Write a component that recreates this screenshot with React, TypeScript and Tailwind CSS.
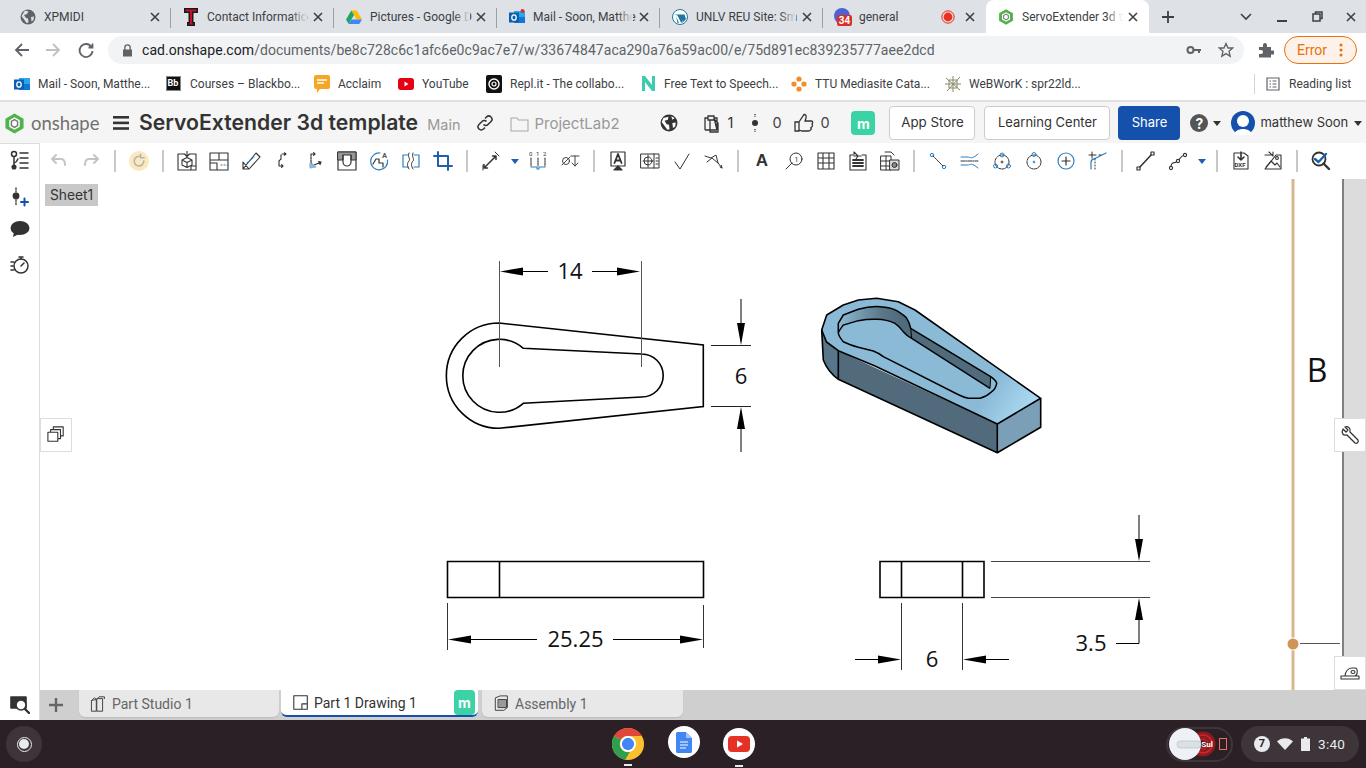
import React from "react";

const S = ({ s = 20, children, c = "#333", w = 1.3, fill = "none", vb }: any) => (
  <svg width={s} height={s} viewBox={vb || "0 0 20 20"} fill={fill} stroke={c} strokeWidth={w} strokeLinecap="round" strokeLinejoin="round" className="shrink-0">
    {children}
  </svg>
);
const BLUE = "#2a7fc4";

const Globe = ({ s = 16, c = "#5f6368" }: any) => (
  <svg width={s} height={s} viewBox="0 0 16 16" className="shrink-0">
    <circle cx="8" cy="8" r="7.5" fill={c} />
    <path d="M5 1.5 L8.5 2.5 L7 5 L4 6 L6 9 L8 9.5 L8.5 13.5 L6.5 14 L3 9 L1.5 7 Z M11 8 L14 7.5 L13.5 11 L11.5 12.5 Z" fill="#dee1e6" />
  </svg>
);
const TT = () => (
  <svg width="14" height="18" viewBox="0 0 14 18" className="shrink-0">
    <path d="M0 0H14V5H9.500V14H11V18H3V14H4.500V5H0Z" fill="#1a1a1a" />
    <path d="M1.500 1.500H12.500V3.500H8V15.500H9.500V16.500H4.500V15.500H6V3.500H1.500Z" fill="#c8102e" />
  </svg>
);
const Drive = () => (
  <svg width="16" height="16" viewBox="0 0 16 16" className="shrink-0">
    <path d="M5.3 1.5H10.7L16 10.5H10.6Z" fill="#fbbc04" />
    <path d="M5.3 1.5L0 10.5L2.7 15L8 6Z" fill="#1fa463" />
    <path d="M5.4 10.5H16L13.3 15H2.7Z" fill="#4285f4" />
  </svg>
);
const Outlook = ({ dot }: any) => (
  <svg width="16" height="16" viewBox="0 0 16 16" className="shrink-0">
    <rect x="5" y="2" width="11" height="12" fill="#28a8ea" />
    <rect x="5" y="8" width="11" height="6" fill="#0f78d4" />
    <rect x="0" y="3.5" width="10" height="10" fill="#0a5fb0" />
    <ellipse cx="5" cy="8.5" rx="2.2" ry="2.7" fill="none" stroke="#fff" strokeWidth="1.3" />
    {dot && <circle cx="13.5" cy="2" r="2" fill="#d93025" />}
  </svg>
);
const WP = () => (
  <svg width="16" height="16" viewBox="0 0 16 16" className="shrink-0">
    <circle cx="8" cy="8" r="7.5" fill="#fff" stroke="#21759b" />
    <path d="M2.5 5.5H8L11 13.5H9L5.5 6.5ZM6.5 5.5H12.5L14 10L11.5 13Z M4 7 L7 14 L5.5 14 Z" fill="#21759b" />
  </svg>
);
const Cal = () => (
  <svg width="18" height="18" viewBox="0 0 18 18" className="shrink-0">
    <circle cx="8" cy="8" r="8" fill="#4a64d8" />
    <rect x="3" y="7" width="15" height="11" rx="2" fill="#d93025" />
    <text x="10.5" y="16" textAnchor="middle" fontSize="10" fontWeight="700" fill="#fff" fontFamily="Roboto, sans-serif">34</text>
  </svg>
);
const OnHex = ({ s = 16 }: any) => (
  <svg width={s} height={s} viewBox="0 0 20 22" className="shrink-0">
    <path d="M10 0.5L19.5 6V16L10 21.5L0.5 16V6Z" fill="#4fb34a" />
    <path d="M10 4.500L15.500 7.700V14.300L10 17.500L4.500 14.300V7.700Z" fill="#fff" />
    <path d="M10 7L13.200 8.900V13.100L10 15L6.800 13.100V8.900Z" fill="none" stroke="#777" strokeWidth="1.500" />
  </svg>
);
const Rec = () => (
  <svg width="14" height="14" viewBox="0 0 14 14" className="shrink-0">
    <circle cx="7" cy="7" r="6.2" fill="#f8d7d4" stroke="#d93025" />
    <circle cx="7" cy="7" r="4.4" fill="#e53225" />
  </svg>
);
const X = ({ c = "#3c4043" }: any) => (
  <svg width="10" height="10" viewBox="0 0 10 10" stroke={c} strokeWidth="1.6" className="shrink-0">
    <path d="M1 1L9 9M9 1L1 9" />
  </svg>
);

function ChromeTab({ icon, title, active, extra, sep = true }: any) {
  return (
    <div className={`relative flex h-[33px] w-[163px] shrink-0 items-center pl-3 pr-[11px] ${active ? "rounded-t-lg bg-white" : ""}`}>
      <div className="flex w-4 items-center justify-center">{icon}</div>
      <div className="relative ml-2 w-[100px] whitespace-nowrap text-[12px] text-[#3c4043]">
        {title}
        <div className={`absolute inset-y-0 right-0 w-4 bg-gradient-to-r from-transparent ${active ? "to-white" : "to-[#dee1e6]"}`} />
      </div>
      <div className="flex flex-1 items-center justify-end gap-[10px]">
        {extra}
        <X />
      </div>
      {sep && <div className="absolute right-0 top-[8px] h-[20px] w-px bg-[#9aa0a6]" />}
    </div>
  );
}

function Bm({ w, icon, t }: any) {
  return (
    <div className="flex shrink-0 items-center" style={{ width: w }}>
      <div className="flex w-4 justify-center">{icon}</div>
      <span className="ml-2 whitespace-nowrap text-[12px] text-[#3c4043]">{t}</span>
    </div>
  );
}

const T = ({ children }: any) => <div className="flex h-9 w-8 shrink-0 items-center justify-center">{children}</div>;
const Sep = () => (
  <div className="flex h-9 w-4 shrink-0 items-center justify-center">
    <div className="h-[22px] w-[2px] bg-[#c8c8c8]" />
  </div>
);
const Caret = () => (
  <div className="flex h-9 w-[15px] shrink-0 items-center justify-center">
    <svg width="8" height="5" viewBox="0 0 8 5"><path d="M0 0H8L4 5Z" fill="#1f5fb0" /></svg>
  </div>
);

function Toolbar() {
  return (
    <div className="flex h-9 shrink-0 items-center bg-white pl-[3px]">
      <T><S c="#c4c4c4" w={2}><path d="M7 4L3 8L7 12M3 8H12C15 8 16 11 16 14" /></S></T>
      <T><S c="#c4c4c4" w={2}><path d="M13 4L17 8L13 12M17 8H8C5 8 4 11 4 14" /></S></T>
      <Sep />
      <T>
        <div className="flex h-5 w-5 items-center justify-center rounded-full bg-[#fbe9bd]">
          <S s={16} c="#b5b5b5" w={2}><path d="M16 10A6 6 0 1 1 12 4.5M12 1.5V6H16.5" /></S>
        </div>
      </T>
      <Sep />
      <T><S w={1.1}><path d="M1 3H7M13 3H19V19H1V3M14 19V15H19" /><path d="M10 0V5M7.500 3L10 5.500L12.500 3" /><path d="M5 9L10 6.500L15 9V14L10 16.500L5 14ZM10 11.500V16.500M5 9L10 11.500L15 9" /></S></T>
      <T><S w={1.1}><path d="M1 2H19V19H1ZM1 9H19M10 2V9M1 12H8V19M8 12" /><path d="M12 14H19" stroke={BLUE} strokeDasharray="1 2" /></S></T>
      <T><S w={1.1}><path d="M2 18L15 2L19 6L8 18Z M2 11L8 18 M2 11V18H8" /><path d="M6 12L13 6" stroke={BLUE} strokeDasharray="1.5 1.5" /></S></T>
      <T><S w={1.2}><path d="M9 3H13M13 3L11 1.5M13 3L11 4.5M8 4V8L6 10V15H10M10 15L8.500 13.500M10 15L8.500 16.500" strokeDasharray="2 1" /></S></T>
      <T><S w={1.2}><path d="M6 3V11L8 16M6 3H10M10 3L8.5 1.5M10 3L8.5 4.5" strokeDasharray="2 1" /><path d="M7 15L16 11M16 11L13.5 10.5M16 11L15 13.5" /><path d="M5 12L11 16L5 17Z" fill="#8fb3d9" stroke="#8fb3d9" /></S></T>
      <T><S w={1.2}><path d="M1 1H19V19H1Z" /><path d="M1 1H19V9H14V4H6V9H1Z" fill="#999" stroke="#333" strokeWidth="1" /><path d="M6 4V11A4 4 0 0 0 14 11V4" /></S></T>
      <T><S c={BLUE} w={1.2}><path d="M11 2A8.500 8.500 0 1 0 18.500 9" /><path d="M4 13L7 8H10V12L14 12V16" stroke="#333" /><text x="13" y="7" fontSize="7.500" fontWeight="700" stroke="none" fill="#555">A</text></S></T>
      <T><S c={BLUE} w={1.2}><path d="M7 4H2V16H7M13 4H18V16H13" /><path d="M8 2C6 6 10 8 8 10S6 15 8 18M12 2C10 6 14 8 12 10S10 15 12 18" stroke="#333" strokeWidth="1" /></S></T>
      <T><S c="#1f5fb0" w={2}><path d="M5 1V15H19M1 5H15V19" /></S></T>
      <Sep />
      <T><S w={1}><path d="M3 17L15 5M3 17V13.500M3 17H6.500M15 5H11.500M15 5V8.500" strokeWidth="1.500" /><path d="M2 14L2 19M14 1L18 5" /></S></T>
      <Caret />
      <T><S c={BLUE} w={1.1}><path d="M3 16H9M11 16H17M9 16V18H11V16" /><path d="M3 7V15M10 7V15M17 7V15" stroke="#333" strokeDasharray="1.500 1" /><text x="1" y="5" fontSize="6" fill="#333" stroke="none">0</text><text x="8" y="5" fontSize="6" fill="#333" stroke="none">1</text><text x="15" y="5" fontSize="6" fill="#333" stroke="none">2</text></S></T>
      <T><S c="#444" w={1}><circle cx="6" cy="10" r="3.500" /><path d="M2 14L10 6M11 5H19M15 5V15M12 12L15 15L18 12" /></S></T>
      <Sep />
      <T><S w={1.2}><path d="M3 1H17V15H3Z" /><path d="M10 3L6.500 12M10 3L13.500 12M7.500 9.500H12.500" strokeWidth="1.800" /><path d="M10 15L6 19H14Z" fill="#333" /></S></T>
      <T><S w={1}><path d="M1 3H19V17H1ZM14 3V17M16 7H18M16 10H18M16 13H18" /><circle cx="8" cy="10" r="4" /><path d="M8 4V16M3 10H13" /></S></T>
      <T><S w={1}><path d="M3 11L8 18L17 3" /></S></T>
      <T><S w={1}><path d="M1 5L7 7L12 4L14 12L18 17M3 11L8 7L14 12M16 16L18 17L17.5 14.5" /></S></T>
      <Sep />
      <T><span className="text-[17px] font-bold text-[#333] [font-family:'Liberation_Sans',sans-serif]">A</span></T>
      <T><S w={1}><circle cx="12" cy="8" r="6" /><path d="M8 12L2 18" /><text x="10.5" y="10.5" fontSize="7" fill="#333" stroke="none">1</text></S></T>
      <T><S w={1.1}><path d="M2 2H18V18H2ZM2 7H18M2 12H18M7 2V18M13 2V18" /></S></T>
      <T><S w={1.1}><path d="M2 4H6M14 4H18V19H2V4" /><path d="M6 1L10 5L8 8M13 5H6M6 1V3" /><path d="M5 9H15M5 12H15M5 15H15" strokeWidth="1.800" /></S></T>
      <T><S w={1}><path d="M1 5H11V19H1ZM1 10H11M1 15H11M6 5V19" /><path d="M5 1H11L14 4" /><rect x="10" y="9" width="9" height="10" fill="#ddd" /><circle cx="14.5" cy="14" r="2.5" fill="#888" /></S></T>
      <Sep />
      <T><S w={1}><circle cx="4" cy="4" r="1.7" stroke={BLUE} /><circle cx="16" cy="16" r="1.7" stroke={BLUE} /><path d="M5 5L15 15" strokeDasharray="2 1" /></S></T>
      <T><S w={1}><path d="M1 6H7C11 6 11 9 18 3M1 14H7C11 14 11 11 18 17" stroke={BLUE} /><path d="M1 10H18" strokeDasharray="4 1 1 1" /></S></T>
      <T><S w={1}><circle cx="10" cy="11" r="7" strokeDasharray="2 1" /><circle cx="10" cy="4" r="2" stroke={BLUE} /><circle cx="3.5" cy="15" r="2" stroke={BLUE} /><circle cx="16.5" cy="15" r="2" stroke={BLUE} /><path d="M10 10V12M9 11H11" /></S></T>
      <T><S w={1}><circle cx="10" cy="11" r="7" strokeDasharray="3 1" /><circle cx="10" cy="3.5" r="2" stroke={BLUE} /><path d="M10 10V12M9 11H11" stroke={BLUE} /></S></T>
      <T><S w={1.2}><circle cx="10" cy="10" r="8" stroke={BLUE} /><path d="M10 6V14M6 10H14" /></S></T>
      <T><S w={1.2}><path d="M3 18V11C3 8 6 8 8 7L18 2" stroke={BLUE} /><path d="M1 4H8M4 1V7M11 4H13" strokeWidth="1" /><path d="M7 8V18" strokeDasharray="1 2" strokeWidth="1" /></S></T>
      <Sep />
      <T><S w={1.2}><path d="M3 17L16 3" strokeWidth="1.6" /><rect x="1" y="16" width="3" height="3" fill="#fff" /><rect x="15" y="1" width="3" height="3" fill="#fff" /></S></T>
      <T><S w={1.1}><path d="M3 16C3 10 7 13 10 10S12 5 17 4" /><circle cx="3" cy="17" r="1.6" fill="#fff" /><circle cx="10" cy="10" r="1.6" fill="#fff" /><circle cx="17" cy="4" r="1.6" fill="#fff" /></S></T>
      <Caret />
      <Sep />
      <T><S w={1.1}><path d="M3 18V2H13L17 5V18Z" /><path d="M10 1V9M7 6L10 9L13 6" strokeWidth="1.6" /><text x="3.5" y="16" fontSize="6" fontWeight="700" fill="#333" stroke="none">DXF</text></S></T>
      <T><S w={1.1}><path d="M2 4H8M13 4H18V18H2Z" /><path d="M6 1L10 5M10 5V1M3 16L8 10L12 14L14 12L17 16" /><circle cx="14" cy="7" r="1.4" /></S></T>
      <Sep />
      <T><S w={1.8}><circle cx="8" cy="8" r="6.5" /><path d="M4 8L7.5 11L15 3" stroke="#1f5fb0" strokeWidth="2.4" /><path d="M12.5 12.5L18 18" strokeWidth="2.4" /></S></T>
    </div>
  );
}

const Arrow = ({ d }: any) => <path d={d} fill="#000" stroke="none" />;

const OUTER = "M821.7 330 L826.700 315 L843.300 305 L858.300 300 L876.700 298.300 L898.300 301.700 L915 310 L1040.7 398.3 L997.3 424 L875 366 L838.3 350.7 L826.500 342 Z";
const RIM = "M838.3 323.3 L843.3 315 L858.3 309.3 C868 306.500 873 306.300 880 306.700 C888 307 892 308 896.700 310.700 C902 314 905 316 906.700 318.300 C908.500 321 910 325 910.700 328.300 L990.700 376.700 C994 379 996 381 996.700 383.300 C996 387 994 390 991.700 391.700 C987 396 983 397.500 980 398.300 L968.300 398.300 C964 397.500 961 396 958 394.500 L883.300 356.700 C880 354 876 352 873.300 351 L858.300 347.300 C851 345 846 343 843.300 341.700 C841 339 838.500 335 838.300 332.700Z";
const FLOOR = "M838.300 332.700 C840 329 842 327 843.300 325 L858.300 320.700 C865 319.500 870 319 876.700 319.300 C884 319.500 890 321 895 323.300 C899 326 901 329 903.300 331.700 C906 335 909 337 911.700 338.300 L990 388.300";

function Drawing() {
  const num = "'Open Sans', sans-serif";
  return (
    <svg width="1302" height="511" viewBox="40 179 1302 511" className="absolute left-0 top-0" fill="none">
      <defs>
        <linearGradient id="topf" x1="880" y1="330" x2="1020" y2="420" gradientUnits="userSpaceOnUse">
          <stop offset="0" stopColor="#8abad6" />
          <stop offset="0.75" stopColor="#8abad6" />
          <stop offset="1" stopColor="#a9d8f2" />
        </linearGradient>
        <linearGradient id="wall" x1="842" y1="0" x2="900" y2="0" gradientUnits="userSpaceOnUse">
          <stop offset="0" stopColor="#8ab4cc" />
          <stop offset="0.7" stopColor="#5a7688" />
          <stop offset="1" stopColor="#4f6b7c" />
        </linearGradient>
      </defs>
      <g stroke="#000" strokeWidth="1.6">
        <path d="M499 323 L703.3 345 V406.5 L499 428.3 A52.65 52.65 0 0 1 499 323 Z" />
        <path d="M523.3 348.3 L641.7 354 A21.5 21.5 0 0 1 641.7 397 L523.3 403.3 A36.5 36.5 0 1 1 523.3 348.3 Z" />
      </g>
      <g stroke="#555" strokeWidth="1">
        <path d="M499.5 261V367M641.5 261V367" />
        <path d="M711 345.5H751M711 406.5H751" stroke="#222" />
      </g>
      <g stroke="#000" strokeWidth="1">
        <path d="M522 271.5H548M592 271.5H620M741 299V325M741 428V452" />
      </g>
      <Arrow d="M500 271.5L523 267.5V275.5Z" />
      <Arrow d="M640 271.5L617 267.5V275.5Z" />
      <Arrow d="M741 345L737 323H745Z" />
      <Arrow d="M741 407L737 429H745Z" />
      <text x="570" y="279" textAnchor="middle" fontSize="22" fill="#111" fontFamily={num}>14</text>
      <text x="741" y="384" textAnchor="middle" fontSize="22" fill="#111" fontFamily={num}>6</text>

      <path d="M821.7 330 L823.3 360 Q828 372 838.3 379.3 L997.3 452.7 L1040.7 427.3 V398 L997.3 424 L838.3 350.7 Z" fill="#516b7c" />
      <path d="M821.7 330 L823.3 360 Q828 372 838.3 379.3 V350.7 L826.500 342 Z" fill="#587689" />
      <path d="M997.3 424 L1040.7 398.3 V427.3 L997.3 452.7 Z" fill="#7a9fb6" />
      <path d={OUTER} fill="url(#topf)" stroke="#000" strokeWidth="1.6" strokeLinejoin="round" />
      <path d={RIM} fill="#8abad6" />
      <path d="M838.3 323.3 L843.3 315 L858.3 309.3 C868 306.500 873 306.300 880 306.700 C888 307 892 308 896.700 310.700 C902 314 905 316 906.700 318.300 C908.500 321 910 325 910.700 328.300 L911.700 338.300 C909 337 906 335 903.300 331.700 C901 329 899 326 895 323.300 C890 321 884 319.500 876.700 319.300 C870 319 865 319.500 858.300 320.700 L843.300 325 C842 327 840 329 838.300 332.700Z" fill="url(#wall)" />
      <path d="M910.700 328.300 L990.700 376.700 L990 388.300 L911.700 338.300Z" fill="#4f6b7c" />
      <path d={RIM} stroke="#000" strokeWidth="1.5" strokeLinejoin="round" />
      <path d={FLOOR} stroke="#000" strokeWidth="1.4" />
      <path d="M910.700 328.300 L911.700 338.300M990.700 376.700 L990 388.300" stroke="#000" strokeWidth="1" />
      <path d="M821.7 330 L823.3 360 Q828 372 838.3 379.3 L997.3 452.7 L1040.7 427.3 V398.3 M838.3 350.7 V379.3 M997.3 424 V452.7" stroke="#000" strokeWidth="1.6" strokeLinejoin="round" />

      <path d="M447.5 561.5H703.5V597.5H447.5ZM499.5 561.5V597.5" stroke="#000" strokeWidth="1.6" />
      <path d="M447.5 603V650M703.5 605V648" stroke="#333" strokeWidth="1" />
      <path d="M470 639.5H537M613 639.5H680" stroke="#000" strokeWidth="1" />
      <Arrow d="M448 639.5L471 635.5V643.5Z" />
      <Arrow d="M703 639.5L680 635.5V643.5Z" />
      <text x="575.500" y="647" textAnchor="middle" fontSize="22" fill="#111" fontFamily={num}>25.25</text>

      <path d="M880 561.5H984V597.5H880ZM901.5 561.5V597.5M962.5 561.5V597.5" stroke="#000" strokeWidth="1.6" />
      <path d="M901.5 603V670M962.5 603V670" stroke="#333" strokeWidth="1" />
      <path d="M991 561.5H1150M991 597.5H1150" stroke="#444" strokeWidth="1" />
      <path d="M855 659.5H880M985 659.5H1009M1139 515V540M1139 618V643.5H1116" stroke="#000" strokeWidth="1" />
      <Arrow d="M901 659.5L878 655.5V663.5Z" />
      <Arrow d="M963 659.5L986 655.5V663.5Z" />
      <Arrow d="M1139 561L1135 539H1143Z" />
      <Arrow d="M1139 598L1135 620H1143Z" />
      <text x="932" y="667" textAnchor="middle" fontSize="22" fill="#111" fontFamily={num}>6</text>
      <text x="1091" y="651" textAnchor="middle" fontSize="22" fill="#111" fontFamily={num}>3.5</text>

      <path d="M1293 179V690" stroke="#d8b78f" strokeWidth="3" />
      <circle cx="1293" cy="644" r="6.5" fill="#fff" />
      <circle cx="1293" cy="644" r="5.5" fill="#cf9557" />
      <path d="M1300 643.5H1340" stroke="#555" strokeWidth="1" />
      <text x="1317" y="382" textAnchor="middle" fontSize="32" fill="#111" fontFamily={num}>B</text>
    </svg>
  );
}

function BottomTab({ w, icon, label, active, badge, cls }: any) {
  return (
    <div className={`flex h-[27px] shrink-0 items-center rounded-b-md pl-[11px] text-[14px] ${cls} ${active ? "border-b-2 border-[#1550ad] bg-white text-[#333]" : "bg-[#e8e8e8] text-[#666] shadow-[0_1px_1px_#bbb]"}`} style={{ width: w }}>
      {icon}
      <span className="ml-[4px] mt-[2px] flex-1 whitespace-nowrap">{label}</span>
      {badge}
    </div>
  );
}

const Mbadge = ({ cls }: any) => (
  <div className={`flex items-center justify-center bg-[#3bd3a5] font-bold text-white [font-family:Inter,sans-serif] ${cls}`}>m</div>
);

const SideBtn = ({ children, cls }: any) => (
  <div className={`absolute flex h-[34px] w-8 items-center justify-center border border-[#ddd] bg-white ${cls}`}>{children}</div>
);

export default function App() {
  return (
    <div className="flex h-[768px] w-[1366px] flex-col overflow-hidden bg-white [font-family:Roboto,sans-serif]">
      <div className="flex h-[33px] shrink-0 items-center bg-[#dee1e6] pl-2">
        <ChromeTab icon={<Globe />} title="XPMIDI" />
        <ChromeTab icon={<TT />} title="Contact Informatio" />
        <ChromeTab icon={<Drive />} title="Pictures - Google D" />
        <ChromeTab icon={<Outlook dot />} title="Mail - Soon, Matthe" />
        <ChromeTab icon={<WP />} title="UNLV REU Site: Sm" />
        <ChromeTab icon={<Cal />} title="general" extra={<Rec />} sep={false} />
        <ChromeTab active icon={<OnHex />} title="ServoExtender 3d t" sep={false} />
        <div className="ml-[11px] flex w-4 justify-center">
          <svg width="14" height="14" viewBox="0 0 14 14" stroke="#3c4043" strokeWidth="1.8"><path d="M7 1V13M1 7H13" /></svg>
        </div>
        <div className="ml-[64px]"><svg width="12" height="8" viewBox="0 0 12 8" fill="none" stroke="#3c4043" strokeWidth="1.6"><path d="M1 1L6 6L11 1" /></svg></div>
        <div className="ml-[25px] mt-2 h-[2px] w-[10px] bg-[#3c4043]" />
        <svg width="11" height="11" viewBox="0 0 11 11" fill="none" stroke="#3c4043" strokeWidth="1.5" className="ml-[25px]"><path d="M1 3H8V10H1ZM3.5 3V1H10V7.5H8" /></svg>
        <div className="ml-[23px]"><X /></div>
      </div>
      <div className="flex h-[34px] shrink-0 items-center bg-white">
        <svg width="18" height="18" viewBox="0 0 18 18" fill="none" stroke="#5f6368" strokeWidth="1.8" className="ml-[13px]"><path d="M16 9H3M9 3L3 9L9 15" /></svg>
        <svg width="18" height="18" viewBox="0 0 18 18" fill="none" stroke="#bdc1c6" strokeWidth="1.8" className="ml-[13px]"><path d="M2 9H15M9 3L15 9L9 15" /></svg>
        <svg width="18" height="18" viewBox="0 0 18 18" fill="none" stroke="#5f6368" strokeWidth="1.8" className="ml-[15px]"><path d="M14.5 6A6.5 6.5 0 1 0 15.5 10M15.5 2.5V6.5H11.5" /></svg>
        <div className="ml-[13px] flex h-[28px] w-[1136px] items-center rounded-full bg-[#f1f3f4] pl-[14px]">
          <svg width="11" height="13" viewBox="0 0 11 13" className="shrink-0"><path d="M1 5.5H2.2V3.5A3.3 3.3 0 0 1 8.8 3.5V5.5H10V12.5H1ZM3.5 5.5H7.5V3.5A2 2 0 0 0 3.5 3.5Z" fill="#5f6368" /></svg>
          <span className="ml-[9px] mt-[1px] whitespace-nowrap text-[14px] tracking-[0.05px] text-[#202124]">cad.onshape.com<span className="text-[#5f6368]">/documents/be8c728c6c1afc6e0c9ac7e7/w/33674847aca290a76a59ac00/e/75d891ec839235777aee2dcd</span></span>
          <div className="flex-1" />
          <svg width="16" height="16" viewBox="0 0 16 16" className="mr-[16px]"><circle cx="4.5" cy="8" r="3" fill="none" stroke="#5f6368" strokeWidth="2" /><path d="M7 7H15V9H14V11H12V9H7Z" fill="#5f6368" /></svg>
          <svg width="16" height="16" viewBox="0 0 16 16" fill="none" stroke="#5f6368" strokeWidth="1.3" className="mr-[10px]"><path d="M8 1.5L10 6H14.8L11 9.2L12.2 14.3L8 11.6L3.8 14.3L5 9.2L1.2 6H6Z" /></svg>
        </div>
        <svg width="16" height="16" viewBox="0 0 16 16" className="ml-[14px]"><path d="M1 5H5V3A2 2 0 0 1 9 3V5H13V8.5H15A2 2 0 0 1 15 12.5H13V15.5H1V12H3A2 2 0 0 0 3 8H1Z" fill="#5f6368" /></svg>
        <div className="ml-[10px] flex h-[28px] w-[73px] items-center rounded-full border border-[#e8710a] bg-[#fdf2e9] pl-[12px]">
          <span className="text-[14px] text-[#e8710a]">Error</span>
          <svg width="4" height="14" viewBox="0 0 4 14" className="ml-[12px]" fill="#e8710a"><circle cx="2" cy="2" r="1.5" /><circle cx="2" cy="7" r="1.5" /><circle cx="2" cy="12" r="1.5" /></svg>
        </div>
      </div>
      <div className="flex h-[33px] shrink-0 items-center bg-white pl-[14px]">
        <Bm w={152} icon={<Outlook />} t="Mail - Soon, Matthe..." />
        <Bm w={148} icon={<div className="flex h-[15px] w-[15px] -translate-x-[1px] items-center justify-center border border-[#888] bg-[#111] text-[9px] font-bold leading-none text-white">Bb</div>} t="Courses – Blackbo..." />
        <Bm w={84} icon={<svg width="16" height="18" viewBox="0 0 16 18"><path d="M2 0H14A2 2 0 0 1 16 2V12A2 2 0 0 1 14 14H6L3 18V14H2A2 2 0 0 1 0 12V2A2 2 0 0 1 2 0Z" fill="#f5a623" /><path d="M3 5H13M3 8H10" stroke="#fff" strokeWidth="1.3" /></svg>} t="Acclaim" />
        <Bm w={88} icon={<svg width="16" height="12" viewBox="0 0 16 12"><rect width="16" height="12" rx="3" fill="#e60012" /><path d="M6.5 3.5L10.5 6L6.5 8.5Z" fill="#fff" /></svg>} t="YouTube" />
        <Bm w={154} icon={<svg width="16" height="18" viewBox="0 0 16 18"><rect width="16" height="18" rx="2" fill="#111" /><circle cx="8" cy="9" r="5" fill="none" stroke="#fff" strokeWidth="1.4" /><circle cx="8" cy="9" r="2" fill="none" stroke="#fff" strokeWidth="1.2" /></svg>} t="Repl.it - The collabo..." />
        <Bm w={151} icon={<svg width="15" height="17" viewBox="0 0 15 17"><path d="M1 1H4L11 10V1H14V16H11L4 7V16H1Z" fill="#3ecbb0" /></svg>} t="Free Text to Speech..." />
        <Bm w={154} icon={<svg width="16" height="16" viewBox="0 0 16 16" fill="#f28c28"><circle cx="8" cy="3" r="2.6" /><circle cx="3" cy="8" r="2.6" /><circle cx="13" cy="8" r="2.6" /><circle cx="8" cy="13" r="2.6" /></svg>} t="TTU Mediasite Cata..." />
        <Bm w={309} icon={<svg width="16" height="16" viewBox="0 0 16 16" fill="none" stroke="#8a8a6a" strokeWidth="1"><path d="M1 2L15 14M15 1L2 15M8 0V16M0 8H16M4 4L12 4L12 12L4 12Z" /></svg>} t="WeBWorK : spr22ld..." />
        <div className="h-[20px] w-px bg-[#d5d5d5]" />
        <svg width="14" height="14" viewBox="0 0 14 14" fill="none" stroke="#5f6368" strokeWidth="1.2" className="ml-[11px]"><path d="M1 1H13V13H1ZM3.5 4H5M3.5 7H5M3.5 10H5M6.5 4H10.5M6.5 7H10.5M6.5 10H10.5" /></svg>
        <span className="ml-[9px] whitespace-nowrap text-[12px] text-[#3c4043]">Reading list</span>
      </div>
      <div className="h-[3px] shrink-0 border-t-2 border-[#e0e0e0] bg-[#f5f5f5]" />
      <div className="flex h-[40px] shrink-0 items-center bg-[#f5f5f5] [font-family:Inter,sans-serif]">
        <div className="ml-[4px]"><OnHex s={21} /></div>
        <span className="ml-[6px] w-[75px] text-[18.500px] leading-none text-[#707070] [font-family:Lato,sans-serif]">onshape</span>
        <svg width="16" height="14" viewBox="0 0 16 14" fill="#333" className="ml-[7px] shrink-0"><rect width="16" height="2.6" /><rect y="5.6" width="16" height="2.6" /><rect y="11.2" width="16" height="2.6" /></svg>
        <span className="ml-[10px] whitespace-nowrap text-[21.200px] font-semibold leading-none text-[#333]">ServoExtender 3d template</span>
        <span className="ml-[9px] mt-[4px] text-[14.5px] text-[#999]">Main</span>
        <svg width="18" height="18" viewBox="0 0 18 18" fill="none" stroke="#333" strokeWidth="1.5" className="ml-[16px]"><path d="M7.5 10.5A3 3 0 0 0 12 10.5L15 7.5A3 3 0 0 0 10.5 3L9 4.5M10.5 7.5A3 3 0 0 0 6 7.5L3 10.5A3 3 0 0 0 7.5 15L9 13.5" /></svg>
        <svg width="19" height="15" viewBox="0 0 19 15" fill="none" stroke="#aaa" strokeWidth="1.1" className="ml-[16px] mt-[3px]"><path d="M1 1H7L8.5 3H18V14H1Z" /></svg>
        <span className="ml-[5px] mt-[3px] w-[127px] text-[15px] text-[#999]">ProjectLab2</span>
        <div className="-ml-[1px]">
          <svg width="18" height="18" viewBox="0 0 16 16"><circle cx="8" cy="8" r="7.5" fill="#333" /><path d="M3 3.5L7.5 2.5L7 5L4 6L6 9L8 9.5L8.5 13.5L6.5 14L3 9L1.5 7Z M11 8L14 7.5L13.5 11L11.5 12.5Z M10 2L13 3.5L11 5Z" fill="#fff" /></svg>
        </div>
        <svg width="20" height="20" viewBox="0 0 20 20" fill="none" stroke="#333" strokeWidth="1.3" className="ml-[23px]"><path d="M4 17V5H7M13 5H16V17ZM4 17H16M7 3H13V7H7ZM10 7H14L17 10V19H9V7Z" /></svg>
        <span className="ml-[6px] w-[21px] text-[14.5px] text-[#333]">1</span>
        <svg width="6" height="20" viewBox="0 0 6 20" className="ml-[4px]"><circle cx="3" cy="10" r="3" fill="#333" /><path d="M3 1V4M3 16V19" stroke="#333" strokeWidth="1.3" strokeDasharray="1.3 1" /></svg>
        <span className="ml-[14px] w-[18px] text-[14.5px] text-[#444]">0</span>
        <svg width="20" height="20" viewBox="0 0 20 20" fill="none" stroke="#333" strokeWidth="1.3" className="ml-[4px]"><path d="M1 9H5V18H1ZM5 9L10 1.5C12 1.5 12.5 3 12 5L11 8H17.5C19 8 19 10 18 11C19 12 18.5 14 17 14.5C17.5 16 16.5 17.5 15 18H8L5 17" /></svg>
        <span className="ml-[6px] w-[19px] text-[14.5px] text-[#444]">0</span>
        <Mbadge cls="ml-[12px] h-6 w-6 rounded-sm text-[14px]" />
        <div className="ml-[14px] flex h-[34px] w-[86px] items-center justify-center rounded border border-[#ccc] bg-white text-[13.300px] text-[#333]">App Store</div>
        <div className="ml-[9px] flex h-[34px] w-[126px] items-center justify-center rounded border border-[#ccc] bg-white text-[13px] text-[#333]">Learning Center</div>
        <div className="ml-[8px] flex h-[34px] w-[62px] items-center justify-center rounded bg-[#1550ad] text-[13px] text-white">Share</div>
        <div className="ml-[10px] flex h-[18px] w-[18px] items-center justify-center rounded-full bg-[#555] text-[14px] font-bold text-white">?</div>
        <svg width="8" height="5" viewBox="0 0 8 5" className="ml-[5px]"><path d="M0 0H8L4 5Z" fill="#333" /></svg>
        <svg width="24" height="24" viewBox="0 0 24 24" className="ml-[10px]"><circle cx="12" cy="12" r="12" fill="#1550ad" /><circle cx="12" cy="10" r="6" fill="#fff" /><path d="M3 24C4 16 20 16 21 24Z" fill="#fff" /></svg>
        <span className="ml-[5px] w-[94px] whitespace-nowrap text-[13px] text-[#333]">matthew Soon</span>
        <svg width="8" height="5" viewBox="0 0 8 5"><path d="M0 0H8L4 5Z" fill="#333" /></svg>
      </div>
      <div className="flex min-h-0 flex-1">
        <div className="flex w-10 shrink-0 flex-col items-center border-r border-t border-[#ddd] bg-white">
          <div className="mt-[6px]"><S w={1.5}><circle cx="4" cy="4" r="2.5" /><circle cx="4" cy="17" r="1.8" fill="#333" /><path d="M4 7V15M4 13C8 12 7 9 8 9M10 3H18M10 8H18M10 13H18M10 18H18" /></S></div>
          <div className="mt-[17px]"><S><circle cx="6" cy="9" r="2.8" fill="#333" /><path d="M6 1V5M6 13V19" strokeDasharray="1.500 1.500" /><path d="M11 15H18M14.5 11.5V18.5" stroke="#1550ad" strokeWidth="2" /></S></div>
          <div className="mt-[13px]"><svg width="20" height="18" viewBox="0 0 20 18"><ellipse cx="10" cy="8" rx="9.5" ry="7" fill="#333" /><path d="M4 12L3 17L9 14Z" fill="#333" /></svg></div>
          <div className="mt-[17px]"><S w={1.5}><circle cx="11" cy="11" r="7" /><path d="M9 2H13M11 2V4M11 11L14 8M1 7H4M1 11H3M1 15H4" /></S></div>
          <div className="flex-1" />
          <div className="mb-[6px]"><S w={1.6}><rect x="1" y="3" width="15" height="11" fill="#333" /><circle cx="11" cy="11" r="5" fill="#fff" /><path d="M15 15L19 19" strokeWidth="2.4" /></S></div>
        </div>
        <div className="flex min-w-0 flex-1 flex-col">
          <Toolbar />
          <div className="relative min-h-0 flex-1 bg-white">
            <Drawing />
            <div className="absolute right-0 top-0 h-full w-6 border-l-2 border-[#808080] bg-[#dcdcdc]" />
            <div className="absolute left-[5px] top-[5px] bg-[#c8c8c8] px-[5px] py-[2px] text-[13.800px] leading-[18px] text-[#333] [font-family:Inter,sans-serif]">Sheet1</div>
            <div className="absolute left-0 top-[239px] flex h-[34px] w-8 items-center justify-center border border-[#ddd] bg-white">
              <S s={18} w={1.2}><path d="M1 7H12V17H1ZM4 7V4H15V14H12M7 4V1H18V11H15" /></S>
            </div>
            <SideBtn cls="right-0 top-[239px]"><S><path d="M3 4L6 7L8 5L5 2C8 1 11 3 10 7L18 15C19 17 17 19 15 18L7 10C3 11 1 8 3 4Z" /></S></SideBtn>
            <SideBtn cls="right-0 top-[477px]"><S w={1.1}><path d="M1 16H19V13H1ZM5 13C5 9 8 5 12 5H15C18 5 18 12 15 13M11 9C11 7 15 7 15 9C15 11 11 11 11 9Z" /></S></SideBtn>
          </div>
          <div className="flex h-[30px] shrink-0 items-start bg-[#cfcfcf]">
            <div className="flex h-[30px] w-[39px] shrink-0 items-center pl-[9px]">
              <svg width="14" height="14" viewBox="0 0 14 14" stroke="#666" strokeWidth="2.4"><path d="M7 0V14M0 7H14" /></svg>
            </div>
            <BottomTab cls="" w={200} label="Part Studio 1" icon={<S s={18} w={1.1} c="#444"><path d="M2 6L7 5V18H2ZM7 5L5 3L2 6M8 4H14V18H8ZM8 4L10 2H16V4" /></S>} />
            <BottomTab cls="ml-[2px]" w={197} active label="Part 1 Drawing 1" icon={<S s={18} w={1.2} c="#333"><path d="M2 2H17V17H2ZM11 17V11H17" /></S>} badge={<Mbadge cls="h-[25px] w-[21px] mr-[3px] rounded-sm text-[14px]" />} />
            <BottomTab cls="ml-[4px]" w={201} label="Assembly 1" icon={<S s={18} w={1.1} c="#444"><path d="M3 3L8 1H16V14L12 17H3Z" /><path d="M6 5H15V14H6Z" fill="#999" /></S>} />
          </div>
        </div>
      </div>
      <div className="flex h-[48px] shrink-0 items-center bg-[#2a2026]">
        <div className="ml-[6px] flex h-9 w-9 items-center justify-center rounded-full bg-[#3e353a]">
          <div className="flex h-[15px] w-[15px] items-center justify-center rounded-full border border-[#e8eaed]"><div className="h-[10px] w-[10px] rounded-full bg-[#e8eaed]" /></div>
        </div>
        <div className="ml-[558px] flex w-[56px] flex-col items-center">
          <div className="mt-[5px] h-[34px]">
            <svg width="34" height="34" viewBox="0 0 36 36">
              <circle cx="18" cy="18" r="17" fill="#fbc02d" />
              <path d="M18 1A17 17 0 0 1 32.700 9.500H18A8.500 8.500 0 0 0 10.600 13.800L3.300 9.500A17 17 0 0 1 18 1Z" fill="#e0463a" />
              <path d="M3.300 9.500L10.600 13.800A8.500 8.500 0 0 0 20 26.300L15 34.700A17 17 0 0 1 3.300 9.500Z" fill="#2e9e4f" />
              <circle cx="18" cy="18" r="8.500" fill="#fff" />
              <circle cx="18" cy="18" r="6.500" fill="#4285f4" />
            </svg>
          </div>
          <div className="mt-[3px] h-[2px] w-[8px] bg-[#e8eaed]" />
        </div>
        <div className="-mt-[4px] flex w-[55px] flex-col items-center">
          <div className="flex h-8 w-8 items-center justify-center rounded-full bg-white">
            <svg width="16" height="21" viewBox="0 0 16 21"><path d="M0 1.500A1.500 1.500 0 0 1 1.500 0H10L16 6V19.500A1.500 1.500 0 0 1 14.500 21H1.500A1.500 1.500 0 0 1 0 19.500Z" fill="#4285f4" /><path d="M10 0L16 6H10Z" fill="#a1c2fa" /><path d="M4 10H12M4 13H12M4 16H10" stroke="#fff" strokeWidth="1.2" /></svg>
          </div>
        </div>
        <div className="flex w-[56px] flex-col items-center">
          <div className="mt-[6px] flex h-8 w-8 items-center justify-center rounded-full bg-white">
            <svg width="22" height="16" viewBox="0 0 22 16"><rect width="22" height="16" rx="4" fill="#e53225" /><path d="M9 4.500L15 8L9 11.500Z" fill="#fff" /></svg>
          </div>
          <div className="mt-[5px] h-[2px] w-[8px] bg-[#e8eaed]" />
        </div>
        <div className="flex-1" />
        <div className="flex h-[35px] w-[67px] items-center rounded-full border-2 border-[#3e353a] pl-[1px]">
          <svg width="48" height="32" viewBox="0 0 48 32" className="shrink-0">
            <circle cx="34" cy="16" r="12.500" fill="#8e1c1f" />
            <circle cx="34" cy="16" r="9" fill="none" stroke="#c9282d" strokeWidth="1.500" />
            <circle cx="34" cy="16" r="5" fill="none" stroke="#c9282d" strokeWidth="1" />
            <path d="M30 12L38 16L30 20Z" fill="#111" />
            <circle cx="16" cy="16" r="16" fill="#eef2f6" />
            <rect x="8" y="13" width="24" height="7" rx="3.500" fill="#dbe0e5" stroke="#b9c0c7" strokeWidth="0.700" />
            <text x="38" y="19" fontSize="8" fontWeight="700" fill="#fff" fontFamily="Roboto, sans-serif" textAnchor="middle">Sul</text>
          </svg>
          <div className="ml-[2px] h-3 w-2 border border-[#e9705f]" />
        </div>
        <div className="ml-2 mr-[7px] flex h-9 w-[118px] items-center rounded-full bg-[#3e353a] pl-[13px]">
          <div className="flex h-4 w-4 items-center justify-center rounded-full bg-[#e8eaed] text-[11px] font-bold text-[#2a2026]">7</div>
          <svg width="16" height="12" viewBox="0 0 16 12" className="ml-[7px]"><path d="M0 3.500C4 -1 12 -1 16 3.500L8 12Z" fill="#e8eaed" /></svg>
          <svg width="9" height="14" viewBox="0 0 9 14" className="ml-[8px]"><path d="M3 0H6V1.500H9V14H0V1.500H3Z" fill="#e8eaed" /></svg>
          <span className="ml-[8px] text-[13.500px] tracking-[0.3px] text-[#e8eaed]">3:40</span>
        </div>
      </div>
    </div>
  );
}
